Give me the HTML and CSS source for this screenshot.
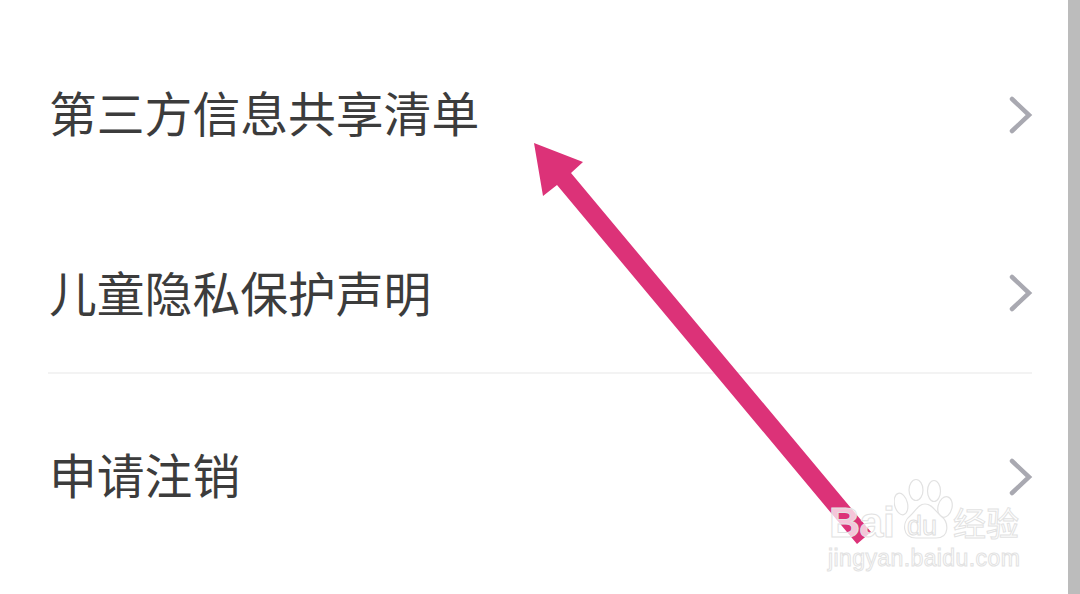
FILE: index.html
```html
<!DOCTYPE html>
<html lang="zh">
<head>
<meta charset="utf-8">
<title>设置</title>
<link rel="stylesheet" href="styles.css">
</head>
<body>
<div class="page">
  <main class="list">
    <div class="row row-first">
      <span class="label">第三方信息共享清单</span>
      <svg class="chev" viewBox="0 0 24 38"><path d="M3 3 L20 19 L3 35"/></svg>
    </div>
    <div class="row row-second">
      <span class="label">儿童隐私保护声明</span>
      <svg class="chev" viewBox="0 0 24 38"><path d="M3 3 L20 19 L3 35"/></svg>
    </div>
    <div class="row row-third">
      <span class="label">申请注销</span>
      <svg class="chev" viewBox="0 0 24 38"><path d="M3 3 L20 19 L3 35"/></svg>
    </div>
  </main>
  <div class="scrollbar"></div>
</div>
<svg class="arrow" viewBox="0 0 1080 594"><polygon points="534,143 583,162 571,173 871,532 857,544 557,185 543,196"/></svg>
<div class="watermark">
  <div class="wm-top">
    <span class="wm-text wm-bai">Bai</span>
    <span class="wm-paw">
      <svg viewBox="0 0 59 62"><g><ellipse cx="7" cy="26" rx="6.5" ry="11" transform="rotate(-14 7 26)"/><ellipse cx="22" cy="12" rx="7" ry="10.5"/><ellipse cx="40" cy="13" rx="6.5" ry="10.5"/><ellipse cx="51" cy="29" rx="7" ry="10.5" transform="rotate(14 51 29)"/><path d="M31 26 C24 26 22 33 16 38 C8 44 8 60 22 60 L42 60 C56 60 55 44 47 38 C41 33 38 26 31 26 Z"/></g></svg>
      <span class="wm-du">du</span>
    </span>
    <span class="wm-text wm-cn">经验</span>
  </div>
  <div class="wm-url">jingyan.baidu.com</div>
</div>
</body>
</html>
```
FILE: styles.css
```css
html, body {
  margin: 0;
  padding: 0;
  width: 1080px;
  height: 594px;
  overflow: hidden;
  background: #fff;
}
body {
  position: relative;
  font-family: "Noto Sans CJK SC", "Liberation Sans", sans-serif;
}
.page {
  display: flex;
  height: 594px;
}
.list {
  flex: 1;
  padding: 0 36px 0 48px;
  display: flex;
  flex-direction: column;
}
.scrollbar {
  width: 12px;
  background: #bcbcbc;
}
.row {
  display: flex;
  align-items: center;
  justify-content: space-between;
  padding-left: 1px;
}
.row-first { height: 230px; }
.row-second { height: 142px; border-bottom: 2px solid #f3f3f3; align-items: flex-start; }
.row-third { height: 206px; }
.label {
  font-size: 47.8px;
  line-height: 64px;
  color: #3c3c3c;
  margin-bottom: 6px;
}
.row-second .label { margin-top: 30px; margin-bottom: 0; }
.row-second .chev { margin-top: 44px; }
.chev {
  width: 24px;
  height: 38px;
  margin-right: -1px;
}
.chev path {
  fill: none;
  stroke: #a9a9b1;
  stroke-width: 4.5;
  stroke-linecap: round;
  stroke-linejoin: miter;
}
.arrow {
  position: absolute;
  left: 0;
  top: 0;
  width: 1080px;
  height: 594px;
}
.arrow polygon { fill: #dc3278; }
.watermark {
  position: absolute;
  left: 829px;
  top: 478px;
  width: 196px;
  font-family: "Liberation Sans", "Noto Sans CJK SC", sans-serif;
}
.wm-top {
  display: flex;
  align-items: flex-end;
  height: 62px;
}
.wm-text {
  color: rgba(255, 255, 255, 0.72);
  -webkit-text-stroke: 1px #e2e2e2;
  font-weight: 700;
  line-height: 36px;
}
.wm-bai { font-size: 43px; letter-spacing: -0.5px; width: 65px; }
.wm-cn { font-size: 33px; font-weight: 400; margin-left: 0; font-family: "Noto Sans CJK SC", sans-serif; }
.wm-paw {
  position: relative;
  width: 59px;
  height: 62px;
  display: block;
}
.wm-paw svg { width: 59px; height: 62px; display: block; }
.wm-paw g { fill: rgba(255,255,255,.8); stroke: #e2e2e2; stroke-width: 1.2; }
.wm-du {
  position: absolute;
  left: 9px;
  bottom: -1px;
  width: 38px;
  text-align: center;
  font-size: 27px;
  line-height: 30px;
  color: #fff;
  -webkit-text-stroke: 1px #dedede;
}
.wm-url {
  font-size: 23px;
  line-height: 27px;
  margin-top: 5px;
  margin-left: -1px;
  color: #fff;
  -webkit-text-stroke: 1px #e2e2e2;
  letter-spacing: 0.4px;
  white-space: nowrap;
}
```
